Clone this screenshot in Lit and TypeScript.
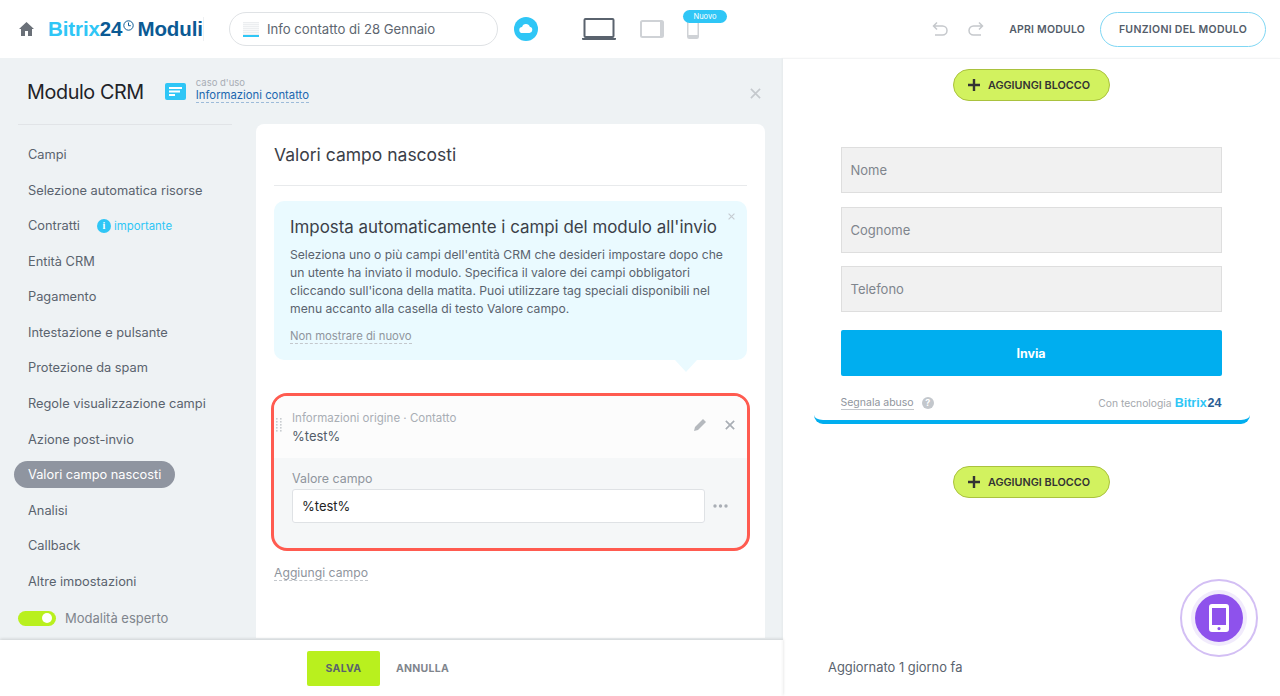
import { LitElement, html, css, svg } from "lit";
import { customElement } from "lit/decorators.js";

const NAV = [
  "Campi",
  "Selezione automatica risorse",
  "Contratti",
  "Entità CRM",
  "Pagamento",
  "Intestazione e pulsante",
  "Protezione da spam",
  "Regole visualizzazione campi",
  "Azione post-invio",
  "Valori campo nascosti",
  "Analisi",
  "Callback",
  "Altre impostazioni",
];

const closeIcon = (size: number, color: string, weight = 2) => html`
  <svg width=${size} height=${size} viewBox="0 0 12 12" fill="none" stroke=${color} stroke-width=${weight}>
    <path d="M1 1 11 11M11 1 1 11" />
  </svg>
`;

const plusIcon = svg`<path d="M6 0h3v6h6v3H9v6H6V9H0V6h6z" fill="#333" />`;

@customElement("app-root")
export class AppRoot extends LitElement {
  static styles = css`
    :host {
      display: block;
      height: 696px;
      overflow: hidden;
      font-family: Inter, "Noto Sans", sans-serif;
      color: #535c69;
      background: #fff;
    }
    * {
      box-sizing: border-box;
    }
    .top {
      height: 58px;
      display: flex;
      align-items: center;
      padding-left: 19px;
      padding-right: 14px;
      background: #fff;
    }
    .home {
      width: 15px;
      height: 14px;
      margin-right: 14px;
    }
    .logo {
      font-family: "Liberation Sans", sans-serif;
      font-weight: 700;
      font-size: 20.5px;
      letter-spacing: -0.1px;
      white-space: nowrap;
      width: 156px;
      display: flex;
      align-items: center;
      color: #2fc6f6;
    }
    .logo b {
      color: #0b5a94;
    }
    .logo svg {
      margin: -7px 3px 0 1px;
    }
    .logo .mod {
      color: #0b5a94;
    }
    .sep {
      width: 1px;
      height: 24px;
      background: #eef0f2;
      margin-right: 25px;
      margin-left: -1px;
    }
    .name {
      width: 269px;
      height: 34px;
      border: 1px solid #dfe2e5;
      border-radius: 17px;
      display: flex;
      align-items: center;
      gap: 8px;
      padding-left: 13px;
      font-size: 13.15px;
      color: #5d6670;
      margin-right: 16px;
    }
    .thumb {
      width: 16px;
      height: 15px;
      background: repeating-linear-gradient(#eceef0 0 1px, #f8f9fa 1px 2px);
      border-bottom: 2px solid #2fc6f6;
    }
    .cloud {
      width: 24px;
      height: 24px;
      margin-right: 44px;
    }
    .devices {
      display: flex;
      align-items: center;
      position: relative;
    }
    .badge {
      position: absolute;
      left: 101px;
      top: -8px;
      width: 44px;
      height: 13px;
      border-radius: 7px;
      background: #2fc6f6;
      color: #fff;
      font-size: 7.5px;
      line-height: 13px;
      text-align: center;
    }
    .actions {
      margin-left: auto;
      display: flex;
      align-items: center;
    }
    .open {
      font-size: 10.5px;
      font-weight: 600;
      letter-spacing: 0.2px;
      color: #535c69;
      margin: 0 15px 0 25px;
      white-space: nowrap;
    }
    .fn {
      width: 166px;
      height: 35px;
      border: 1px solid #7fd7f4;
      border-radius: 18px;
      font-size: 10.5px;
      font-weight: 600;
      letter-spacing: 0.3px;
      color: #535c69;
      display: flex;
      align-items: center;
      justify-content: center;
      white-space: nowrap;
    }
    .main {
      display: flex;
      height: 638px;
    }
    .left {
      width: 783px;
      display: flex;
      flex-direction: column;
      background: #eef2f4;
      position: relative;
    }
    .left-body {
      height: 582px;
      display: flex;
      flex-direction: column;
      overflow: hidden;
    }
    .heading {
      height: 66px;
      padding-left: 27px;
      padding-right: 22px;
      display: flex;
      align-items: center;
      flex: none;
    }
    .heading h1 {
      margin: 2px 21px 0 0;
      font-size: 19.8px;
      font-weight: 400;
      letter-spacing: -0.4px;
      color: #1f2328;
      white-space: nowrap;
    }
    .usecase {
      margin-left: 10px;
      margin-top: -3px;
      flex: 1;
      font-size: 11.3px;
      line-height: 14px;
    }
    .usecase small {
      display: block;
      font-size: 9.5px;
      line-height: 11px;
      color: #a8adb4;
    }
    .usecase a {
      font-size: 11.3px;
      line-height: 14px;
      color: #2067b0;
      border-bottom: 1px dashed #9dbbd9;
      display: inline-block;
      vertical-align: top;
    }
    .columns {
      display: flex;
      flex: 1;
      min-height: 0;
    }
    .side {
      width: 256px;
      flex: none;
      display: flex;
      flex-direction: column;
    }
    .side hr {
      width: 214px;
      margin: 0 0 0 18px;
      border: 0;
      border-top: 1px solid #e1e4e7;
      flex: none;
    }
    .nav {
      height: 461px;
      overflow: hidden;
      padding-top: 16px;
      flex: none;
    }
    .nav-item {
      margin-left: 14px;
      height: 27px;
      margin-bottom: 8.58px;
      width: max-content;
      padding: 0 14px;
      display: flex;
      align-items: center;
      border-radius: 14px;
      font-size: 12.8px;
      color: #5a636e;
      white-space: nowrap;
    }
    .nav-item.on {
      background: #8f95a0;
      color: #fff;
    }
    .hint {
      display: inline-flex;
      align-items: center;
      gap: 3px;
      margin-left: 17px;
      font-size: 11.4px;
      color: #2fc6f6;
    }
    .hint i {
      width: 14px;
      height: 14px;
      border-radius: 50%;
      background: #2fc6f6;
      color: #fff;
      font: 700 10px/14px "Liberation Serif", serif;
      text-align: center;
    }
    .expert {
      display: flex;
      align-items: center;
      gap: 9px;
      margin: 24px 0 0 18px;
      font-size: 13px;
      color: #7f858d;
    }
    .toggle {
      width: 38px;
      height: 15px;
      border-radius: 8px;
      background: #b9f01e;
      position: relative;
    }
    .toggle::after {
      content: "";
      position: absolute;
      right: 4px;
      top: 2.5px;
      width: 10px;
      height: 10px;
      border-radius: 50%;
      background: #fff;
    }
    .card {
      width: 509px;
      height: 514px;
      background: #fff;
      border-radius: 8px 8px 0 0;
      padding: 0 18px;
      display: flex;
      flex-direction: column;
    }
    .card h2 {
      margin: 0;
      height: 62px;
      flex: none;
      border-bottom: 1px solid #e8eaec;
      display: flex;
      align-items: center;
      font-size: 17.5px;
      font-weight: 400;
      color: #3b4048;
    }
    .tip {
      margin-top: 15px;
      height: 159px;
      flex: none;
      background: #eafaff;
      border-radius: 10px;
      padding: 14px 16px;
      position: relative;
    }
    .tip::after {
      content: "";
      position: absolute;
      right: 50px;
      bottom: -12px;
      border-left: 11px solid transparent;
      border-right: 11px solid transparent;
      border-top: 12px solid #eafaff;
    }
    .tip-x {
      position: absolute;
      right: 12px;
      top: 12px;
      line-height: 0;
    }
    .tip h3 {
      margin: 0 0 7px;
      font-size: 16.9px;
      line-height: 24px;
      font-weight: 400;
      color: #3b4048;
      white-space: nowrap;
    }
    .tip p {
      margin: 0;
      font-size: 12.15px;
      line-height: 18px;
      color: #5a636e;
    }
    .tip a,
    .add-field {
      display: inline-block;
      color: #8f959d;
      border-bottom: 1px dashed #c3c7cc;
    }
    .tip a {
      margin-top: 11px;
      font-size: 11.3px;
      line-height: 14px;
    }
    .field {
      margin: 33px -3px 0;
      height: 158px;
      flex: none;
      border: 3px solid #ff5b50;
      border-radius: 16px;
      overflow: hidden;
      background: #f5f7f8;
    }
    .field-head {
      height: 62px;
      background: #fcfcfc;
      display: flex;
      align-items: center;
      padding: 0 12px 4px 0;
    }
    .grip {
      width: 7px;
      margin: 0 9px 0 2px;
    }
    .field-title {
      flex: 1;
      padding-top: 5px;
    }
    .field-title small {
      display: block;
      font-size: 11.5px;
      line-height: 15px;
      color: #a9aeb5;
      margin-bottom: -1px;
    }
    .field-title span {
      font-size: 13px;
      line-height: 17px;
      color: #535c69;
    }
    .field-btns {
      display: flex;
      align-items: center;
      gap: 19px;
    }
    .field-body {
      padding: 13px 15px 0 18px;
    }
    .field-body label {
      display: block;
      font-size: 12.4px;
      line-height: 16px;
      color: #8f959d;
      margin-bottom: 2px;
    }
    .value-row {
      display: flex;
      align-items: center;
      gap: 8px;
    }
    .value {
      width: 413px;
      height: 34px;
      background: #fff;
      border: 1px solid #dfe2e5;
      border-radius: 3px;
      padding-left: 9px;
      display: flex;
      align-items: center;
      font-size: 13px;
      color: #222;
    }
    .add-field {
      align-self: flex-start;
      margin-top: 14px;
      font-size: 12.2px;
      line-height: 15px;
    }
    .bottom {
      height: 56px;
      flex: none;
      background: #fff;
      margin-top: 0;
      box-shadow: 0 -1px 3px rgba(0, 0, 0, 0.14);
      display: flex;
      align-items: center;
      padding-left: 307px;
      gap: 16px;
      position: relative;
      font-size: 10.5px;
      font-weight: 700;
      letter-spacing: 0.25px;
    }
    .save {
      width: 73px;
      height: 35px;
      border-radius: 2px;
      background: #b9f01e;
      color: #5a636e;
      display: flex;
      align-items: center;
      justify-content: center;
    }
    .cancel {
      color: #7f858d;
    }
    .close {
      line-height: 0;
      margin-top: 4px;
    }
    .right {
      width: 497px;
      display: flex;
      flex-direction: column;
      align-items: center;
      position: relative;
      border-top: 1px solid #f3f4f5;
      box-shadow: -1px 0 2px rgba(0, 0, 0, 0.04);
    }
    .add-block {
      width: 157px;
      height: 32px;
      flex: none;
      border: 1px solid #aac23e;
      border-radius: 16px;
      background: #d2f25f;
      display: flex;
      align-items: center;
      gap: 8px;
      padding-left: 14px;
      font-size: 10.8px;
      font-weight: 600;
      color: #333;
      white-space: nowrap;
      margin-top: 10px;
    }
    .add-block svg {
      flex: none;
    }
    .form {
      width: 436px;
      height: 323px;
      flex: none;
      margin: 0 0 32px;
      padding: 46px 28px 0 27px;
      border-bottom: 4px solid #00aeef;
      border-radius: 0 0 9px 9px;
    }
    .input {
      height: 46px;
      margin-bottom: 13.5px;
      background: #f1f1f1;
      border: 1px solid #dedede;
      padding-left: 9px;
      display: flex;
      align-items: center;
      font-size: 13px;
      color: #7f858d;
    }
    .send {
      height: 46px;
      margin-top: 18px;
      background: #00aeef;
      border-radius: 2px;
      color: #fff;
      font-size: 12.5px;
      font-weight: 700;
      display: flex;
      align-items: center;
      justify-content: center;
    }
    .form-foot {
      margin-top: 20px;
      display: flex;
      align-items: center;
      font-size: 10.3px;
      color: #a4a8ad;
    }
    .abuse {
      font-size: 10.5px;
      color: #8f959d;
      border-bottom: 1px solid #c3c7cc;
    }
    .help {
      width: 12px;
      height: 12px;
      margin-left: 8px;
      border-radius: 50%;
      background: #c3c7cc;
      color: #fff;
      font-size: 9px;
      font-weight: 700;
      line-height: 12px;
      text-align: center;
    }
    .powered {
      margin-left: auto;
      display: flex;
      align-items: center;
      gap: 3px;
    }
    .powered b {
      font-family: "Liberation Sans", sans-serif;
      font-size: 12.5px;
      color: #2fc6f6;
    }
    .powered b span {
      color: #2a5d94;
      margin-left: 1px;
    }
    .updated {
      margin-top: auto;
      height: 36px;
      align-self: flex-start;
      padding-left: 45px;
      font-size: 12.9px;
      color: #5a636e;
    }
    .fab {
      position: absolute;
      left: 397px;
      top: 520px;
      width: 78px;
      height: 78px;
      border-radius: 50%;
      border: 2px solid #d3bff4;
      display: flex;
      align-items: center;
      justify-content: center;
      background: #fff;
    }
    .fab div {
      width: 48px;
      height: 48px;
      border-radius: 50%;
      background: #8e52ec;
      box-shadow: 0 0 0 4px #f1ebfc;
      display: flex;
      align-items: center;
      justify-content: center;
    }
  `;

  renderHeader() {
    return html`
      <header class="top">
        <svg class="home" viewBox="0 0 15 14"><path d="M7.5 0 15 7h-2v7H9V9H6v5H2V7H0z" fill="#6a7078" /></svg>
        <div class="logo">
          Bitrix<b>24</b>
          <svg width="11" height="11" viewBox="0 0 11 11" fill="none" stroke="#0b5a94" stroke-width="1">
            <circle cx="5.5" cy="5.5" r="4.7" /><path d="M5.5 2.5v3.2h2.3" />
          </svg>
          <span class="mod">Moduli</span>
        </div>
        <div class="sep"></div>
        <div class="name"><span class="thumb"></span>Info contatto di 28 Gennaio</div>
        <svg class="cloud" viewBox="0 0 24 24">
          <circle cx="12" cy="12" r="12" fill="#2fc6f6" />
          <path d="M8.5 16a3 3 0 0 1-.4-6 4 4 0 0 1 7.7-.3A3.2 3.2 0 0 1 15.5 16z" fill="#fff" />
        </svg>
        <div class="devices">
          <svg width="34" height="22" viewBox="0 0 34 22" fill="none">
            <rect x="2.5" y="1" width="29" height="18" rx="1" stroke="#5a636e" stroke-width="2" />
            <path d="M0 20h34v1a1 1 0 0 1-1 1H1a1 1 0 0 1-1-1z" fill="#5a636e" />
          </svg>
          <svg style="margin-left:24px" width="24" height="18" viewBox="0 0 24 18" fill="none">
            <rect x="1" y="1" width="22" height="16" rx="1.5" fill="#fff" stroke="#cfd2d6" stroke-width="2" />
            <path d="M20 1h3v16h-3z" fill="#cfd2d6" />
          </svg>
          <svg style="margin-left:23px" width="12" height="20" viewBox="0 0 12 20" fill="none">
            <rect x=".75" y=".75" width="10.5" height="18.5" rx="1.5" stroke="#cfd2d6" stroke-width="1.5" />
            <path d="M1 16h10v3H1z" fill="#cfd2d6" />
          </svg>
          <span class="badge">Nuovo</span>
        </div>
        <div class="actions">
          <svg width="16" height="16" viewBox="0 0 16 16" fill="none" stroke="#c5c8cc" stroke-width="1.5">
            <path d="M5 1.5 1.5 5 5 8.5M1.5 5h9a4 4 0 0 1 0 9H3" />
          </svg>
          <svg style="margin-left:20px" width="16" height="16" viewBox="0 0 16 16" fill="none" stroke="#c5c8cc" stroke-width="1.5">
            <path d="M11 1.5 14.5 5 11 8.5M14.5 5h-9a4 4 0 0 0 0 9H13" />
          </svg>
          <span class="open">APRI MODULO</span>
          <div class="fn">FUNZIONI DEL MODULO</div>
        </div>
      </header>
    `;
  }

  renderNav() {
    return html`
      <div class="side">
        <hr />
        <div class="nav">
          ${NAV.map(
            (item) => html`
              <div class="nav-item ${item === "Valori campo nascosti" ? "on" : ""}">
                ${item}
                ${item === "Contratti" ? html`<span class="hint"><i>i</i>importante</span>` : ""}
              </div>
            `
          )}
        </div>
        <div class="expert"><span class="toggle"></span>Modalità esperto</div>
      </div>
    `;
  }

  renderCard() {
    return html`
      <section class="card">
        <h2>Valori campo nascosti</h2>
        <div class="tip">
          <span class="tip-x">${closeIcon(7, "#c5ccd2", 2)}</span>
          <h3>Imposta automaticamente i campi del modulo all'invio</h3>
          <p>
            Seleziona uno o più campi dell'entità CRM che desideri impostare dopo che<br />
            un utente ha inviato il modulo. Specifica il valore dei campi obbligatori<br />
            cliccando sull'icona della matita. Puoi utilizzare tag speciali disponibili nel<br />
            menu accanto alla casella di testo Valore campo.
          </p>
          <a>Non mostrare di nuovo</a>
        </div>
        <div class="field">
          <div class="field-head">
            <svg class="grip" width="7" height="14" viewBox="0 0 7 14" fill="#c8ccd0">
              ${[0, 3, 6, 9, 12].map(
                (y) => svg`<rect x="0" y=${y} width="1.6" height="1.6" /><rect x="4" y=${y} width="1.6" height="1.6" />`
              )}
            </svg>
            <div class="field-title">
              <small>Informazioni origine · Contatto</small>
              <span>%test%</span>
            </div>
            <div class="field-btns">
              <svg width="12" height="12" viewBox="0 0 12 12"><path d="M9 0l3 3-8 8-4 1 1-4z" fill="#b5b9be" /></svg>
              ${closeIcon(10, "#a9aeb5", 2)}
            </div>
          </div>
          <div class="field-body">
            <label>Valore campo</label>
            <div class="value-row">
              <div class="value">%test%</div>
              <svg width="15" height="4" viewBox="0 0 15 4" fill="#a9aeb5">
                <circle cx="2" cy="2" r="1.7" /><circle cx="7.5" cy="2" r="1.7" /><circle cx="13" cy="2" r="1.7" />
              </svg>
            </div>
          </div>
        </div>
        <a class="add-field">Aggiungi campo</a>
      </section>
    `;
  }

  renderPreview() {
    const addBlock = html`
      <div class="add-block">
        <svg width="12" height="12" viewBox="0 0 15 15">${plusIcon}</svg>
        AGGIUNGI BLOCCO
      </div>
    `;
    return html`
      <aside class="right">
        ${addBlock}
        <div class="form">
          <div class="input">Nome</div>
          <div class="input">Cognome</div>
          <div class="input">Telefono</div>
          <div class="send">Invia</div>
          <div class="form-foot">
            <span class="abuse">Segnala abuso</span><span class="help">?</span>
            <span class="powered">Con tecnologia <b>Bitrix<span>24</span></b></span>
          </div>
        </div>
        ${addBlock}
        <div class="updated">Aggiornato 1 giorno fa</div>
        <div class="fab">
          <div>
            <svg width="20" height="28" viewBox="0 0 20 28">
              <path fill-rule="evenodd" fill="#fff" d="M3 0h14a3 3 0 0 1 3 3v22a3 3 0 0 1-3 3H3a3 3 0 0 1-3-3V3a3 3 0 0 1 3-3zm0 4v17h14V4zm7 19a1.6 1.6 0 1 0 0 3.2 1.6 1.6 0 0 0 0-3.2z" />
            </svg>
          </div>
        </div>
      </aside>
    `;
  }

  render() {
    return html`
      ${this.renderHeader()}
      <div class="main">
        <div class="left">
          <div class="left-body">
            <div class="heading">
              <h1>Modulo CRM</h1>
              <svg width="21" height="17" viewBox="0 0 21 17">
                <rect width="21" height="17" rx="2" fill="#2fc6f6" />
                <path d="M4 4h13v2H4zM4 7.5h11v2H4zM4 11h6v2H4z" fill="#fff" />
              </svg>
              <div class="usecase">
                <small>caso d'uso</small>
                <a>Informazioni contatto</a>
              </div>
              <span class="close">${closeIcon(11, "#c5c9cd", 1.8)}</span>
            </div>
            <div class="columns">
              ${this.renderNav()}
              ${this.renderCard()}
            </div>
          </div>
          <footer class="bottom">
            <span class="save">SALVA</span>
            <span class="cancel">ANNULLA</span>
          </footer>
        </div>
        ${this.renderPreview()}
      </div>
    `;
  }
}
